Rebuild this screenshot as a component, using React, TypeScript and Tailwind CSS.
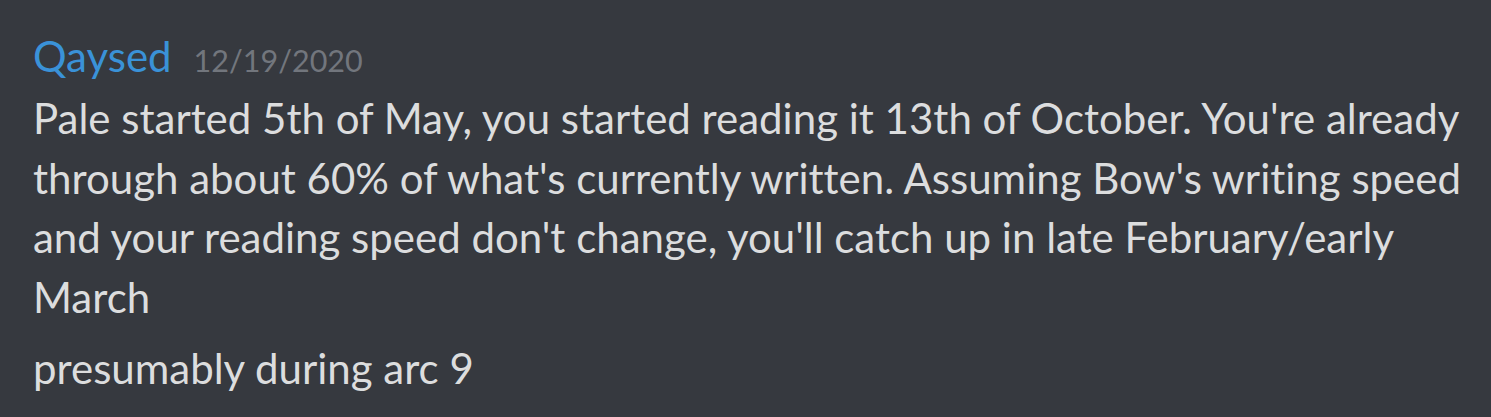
const lines = [
    "Pale started 5th of May, you started reading it 13th of October. You're already through about 60% of what's currently written. Assuming Bow's writing speed and your reading speed don't change, you'll catch up in late February/early March",
];

const App = () => {
    return (
        <div
            className="h-[417px] w-[1491px] overflow-hidden bg-[#36393f] pl-[33px] pr-[20px] pt-[27px] text-[42px] leading-[59.5px] text-[#dcddde] [font-variant-ligatures:none]"
            style={{ fontFamily: "Lato, 'Liberation Sans', sans-serif" }}
        >
            <div className="flex h-[59.5px] items-baseline">
                <span className="text-[#3a92d8]">Qaysed</span>
                <span className="ml-[22px] text-[30.5px] leading-none text-[#72767d]">12/19/2020</span>
            </div>
            <div className="mt-[2.5px]">
                {lines.map((line) => (
                    <p key={line}>{line}</p>
                ))}
            </div>
            <p className="mt-[12px]">presumably during arc 9</p>
        </div>
    );
};

export default App;
